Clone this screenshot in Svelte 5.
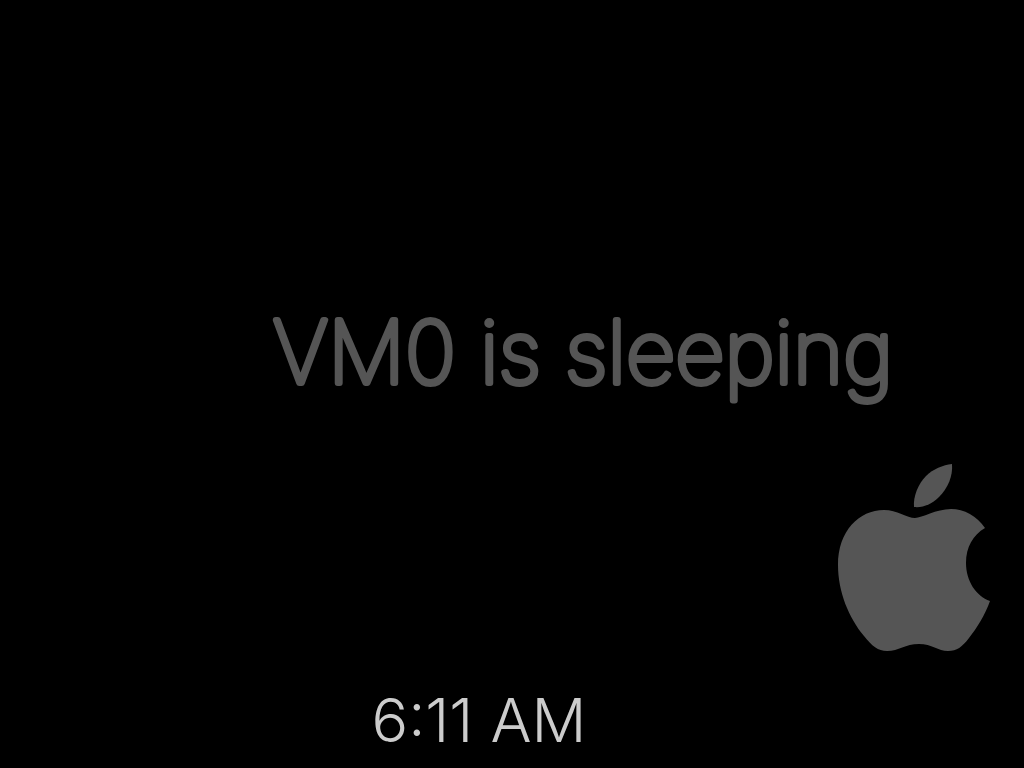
<script lang="ts">
  let machine: string = "VM0";
  let time: string = "6:11 AM";
</script>

<main>
  <h1>
    <svg class="message">
      <text x="0" y="83">{machine} is sleeping</text>
    </svg>
  </h1>

  <svg class="logo" viewBox="0 0 153 188" role="img" aria-label="Apple">
    <path d="M114 0 C115 12 110 24 101 33 C94 40 85 44 76 43 C75 33 80 20 88 12 C95 5 105 1 114 0 Z" />
    <path d="M77 54 C84 54 98 45 113 45 C126 45 139 52 147 64 C135 71 128 83 128 99 C128 117 138 132 152 137 C147 151 139 164 131 174 C124 183 119 187 110 187 C100 187 94 180 81 180 C67 180 61 187 49 187 C40 187 34 182 26 172 C11 154 0 128 0 101 C0 67 21 46 46 46 C59 46 69 54 77 54 Z" />
  </svg>

  <time>{time}</time>
</main>

<style>
  :global(body) {
    margin: 0;
    background: #000;
  }

  main {
    display: flex;
    flex-direction: column;
    box-sizing: border-box;
    min-height: 100vh;
    padding: 300px 33px 12px;
    background: #000;
    color: #555;
    font-family: Inter, "Liberation Sans", sans-serif;
  }

  h1 {
    margin: 0;
    padding-left: 240px;
    font-size: 86px;
    font-weight: 100;
  }

  .message {
    display: block;
    width: 100%;
    height: 106px;
    overflow: visible;
    fill: #555;
    stroke: #555;
    /* rounds off the ends of the letters */
    stroke-width: 6px;
    stroke-linejoin: round;
  }

  .logo {
    align-self: flex-end;
    width: 153px;
    height: 188px;
    margin-top: 58px;
    fill: #555;
  }

  time {
    align-self: center;
    margin-top: auto;
    margin-right: 66px;
    color: #ccc;
    font-size: 61px;
    font-weight: 300;
    line-height: 72px;
  }
</style>
